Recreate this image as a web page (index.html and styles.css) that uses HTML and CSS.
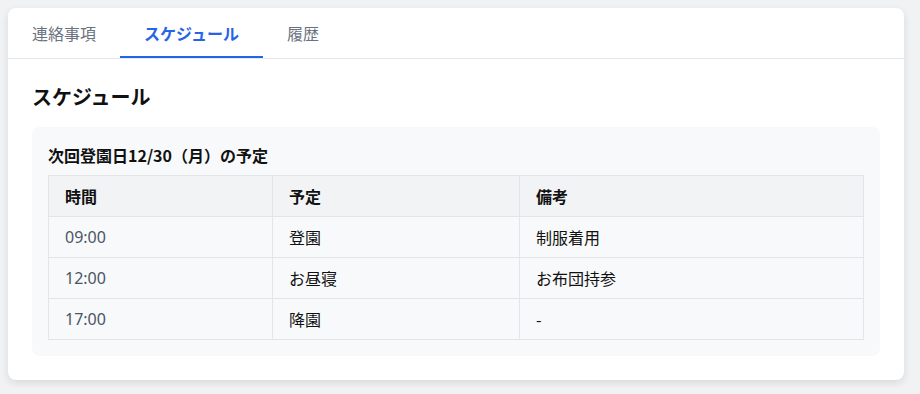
FILE: index.html
```html
<!DOCTYPE html>
<html lang="ja">
<head>
<meta charset="utf-8">
<title>スケジュール</title>
<link rel="stylesheet" href="styles.css">
</head>
<body>
<div class="card">
  <nav class="tabs">
    <div class="tab">連絡事項</div>
    <div class="tab active">スケジュール</div>
    <div class="tab">履歴</div>
  </nav>
  <section class="content">
    <h2 class="heading">スケジュール</h2>
    <div class="panel">
      <h3 class="panel-title">次回登園日12/30（月）の予定</h3>
      <table class="schedule">
        <thead>
          <tr>
            <th class="col-time">時間</th>
            <th class="col-plan">予定</th>
            <th class="col-note">備考</th>
          </tr>
        </thead>
        <tbody>
          <tr><td class="time">09:00</td><td>登園</td><td>制服着用</td></tr>
          <tr><td class="time">12:00</td><td>お昼寝</td><td>お布団持参</td></tr>
          <tr><td class="time">17:00</td><td>降園</td><td>-</td></tr>
        </tbody>
      </table>
    </div>
  </section>
</div>
</body>
</html>
```
FILE: styles.css
```css
html, body {
  margin: 0;
  padding: 0;
}
body {
  background: #f1f2f4;
  padding: 8px;
  font-family: "Noto Sans", "Noto Sans CJK JP", sans-serif;
  color: #111111;
}
.card {
  width: 896px;
  background: #ffffff;
  border-radius: 8px;
  box-shadow: 0 3px 8px rgba(0, 0, 0, 0.10);
  overflow: hidden;
}
.tabs {
  display: flex;
  border-bottom: 1px solid #e5e7eb;
}
.tab {
  padding: 13px 24px;
  font-size: 16px;
  line-height: 24px;
  color: #6b7280;
  font-family: "Noto Sans CJK JP", sans-serif;
}
.tab.active {
  color: #2563eb;
  font-weight: 700;
  box-shadow: inset 0 -2px 0 #2563eb;
}
.content {
  padding: 24px 24px 24px;
}
.heading {
  margin: 0 0 16px;
  font-size: 20px;
  line-height: 28px;
  font-weight: 700;
  font-family: "Noto Sans CJK JP", sans-serif;
  color: #111111;
}
.panel {
  background: #f8f9fb;
  border-radius: 8px;
  padding: 16px;
}
.panel-title {
  margin: 0 0 8px;
  font-size: 16px;
  line-height: 24px;
  font-weight: 700;
  font-family: "Noto Sans CJK JP", sans-serif;
}
.schedule {
  width: 100%;
  border-collapse: collapse;
  font-size: 16px;
  font-family: "Noto Sans", "Noto Sans CJK JP", sans-serif;
}
.schedule th,
.schedule td {
  border: 1px solid #e3e5e8;
  padding: 8px 16px;
  text-align: left;
  line-height: 24px;
}
.schedule th {
  background: #f2f3f5;
  font-weight: 700;
  font-family: "Noto Sans CJK JP", sans-serif;
}
.schedule td {
  font-family: "Noto Sans CJK JP", sans-serif;
}
.schedule td.time {
  color: #4b5563;
  font-family: "Noto Sans", sans-serif;
}
.col-time { width: 224px; box-sizing: border-box; }
.col-plan { width: 247px; box-sizing: border-box; }
.col-note { box-sizing: border-box; }
```
